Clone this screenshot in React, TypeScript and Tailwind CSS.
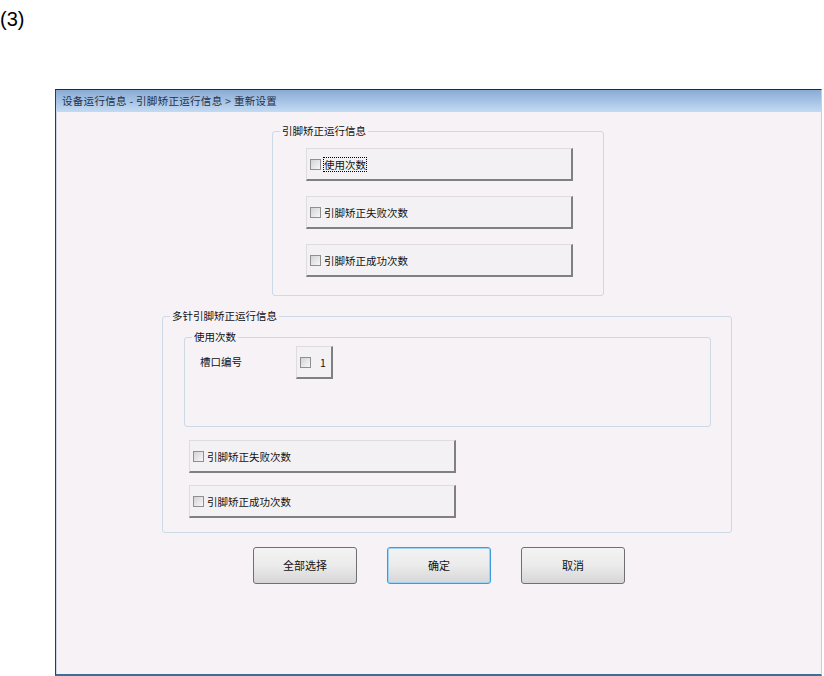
import React from 'react'

const cjk = { fontFamily: '"Noto Sans CJK SC", "Noto Sans", sans-serif' }

function Check() {
  return (
    <span className="inline-block w-[11px] h-[11px] shrink-0 border border-[#8e8f8f] bg-gradient-to-br from-[#d4d4d4] to-[#f7f7f7]" />
  )
}

function OptionButton({ label, focused, className = 'w-[267px] gap-[3px]' }: { label: string; focused?: boolean; className?: string }) {
  return (
    <div className={`${className} h-[33px] flex items-center pl-[3px] bg-[#f4f1f4] border-t border-l border-t-[#dedcde] border-l-[#dedcde] border-b-2 border-r-2 border-b-[#808080] border-r-[#808080]`}>
      <Check />
      <span className={`text-[10.5px] leading-[13px] text-[#111] ${focused ? 'outline-1 outline-dotted outline-black' : ''}`}>{label}</span>
    </div>
  )
}

function Group({ title, className, children }: { title: string; className: string; children: React.ReactNode }) {
  return (
    <div className={`relative border border-[#cdd9e5] rounded-[3px] ${className}`}>
      <span className="absolute -top-[8px] left-[7px] px-[2px] bg-[#f6f2f6] text-[10.5px] leading-[14px] text-[#111]">{title}</span>
      {children}
    </div>
  )
}

function DlgButton({ label, primary }: { label: string; primary?: boolean }) {
  return (
    <div
      className={`w-[104px] h-[37px] flex items-center justify-center rounded-[3px] border text-[11px] text-[#111] bg-gradient-to-b from-[#f3f3f3] via-[#ebebeb] to-[#d6d6d6] ${
        primary ? 'border-[#3c9be0] shadow-[inset_0_0_0_1px_#9fd4f5]' : 'border-[#707070]'
      }`}
    >
      {label}
    </div>
  )
}

export default function App() {
  return (
    <div className="w-[824px] h-[676px] bg-white overflow-hidden" style={cjk}>
      <div className="pt-[8px] text-[20px] leading-[23px] text-black" style={{ fontFamily: '"Liberation Sans", Arial, sans-serif' }}>
        (3)
      </div>

      <div className="ml-[55px] mt-[58px] w-[767px] h-[587px] flex flex-col border-l border-t border-l-[#3a3a3a] border-t-[#2a2a2a] border-r border-r-[#b9d2ee] border-b-2 border-b-[#3b6f98]">
        {/* title bar */}
        <div className="h-[22px] shrink-0 flex items-center pl-[6px] bg-gradient-to-b from-[#8aabd4] to-[#c3daf3] text-[10.5px] tracking-[0.3px] text-[#22304a]">
          设备运行信息 - 引脚矫正运行信息 &gt; 重新设置
        </div>

        <div className="flex-1 bg-[#f6f2f6] border-l border-l-[#c9d6e4] flex flex-col">
          <Group title="引脚矫正运行信息" className="ml-[215px] mt-[19px] w-[332px] h-[165px] pl-[33px] pt-[16px] flex flex-col gap-[15px]">
            <OptionButton label="使用次数" focused />
            <OptionButton label="引脚矫正失败次数" />
            <OptionButton label="引脚矫正成功次数" />
          </Group>

          <Group title="多针引脚矫正运行信息" className="ml-[105px] mt-[20px] w-[570px] h-[217px] pt-[20px] flex flex-col">
            <Group title="使用次数" className="ml-[21px] w-[527px] h-[90px] flex items-start">
              <span className="ml-[15px] mt-[17px] text-[10.5px] leading-[14px] text-[#111]">槽口编号</span>
              <div className="ml-[54px] mt-[8px]">
                <OptionButton label="1" className="w-[37px] gap-[9px]" />
              </div>
            </Group>
            <div className="ml-[26px] mt-[13px] flex flex-col gap-[12px]">
              <OptionButton label="引脚矫正失败次数" />
              <OptionButton label="引脚矫正成功次数" />
            </div>
          </Group>

          <div className="ml-[196px] mt-[14px] flex gap-[30px]">
            <DlgButton label="全部选择" />
            <DlgButton label="确定" primary />
            <DlgButton label="取消" />
          </div>
        </div>
      </div>
    </div>
  )
}
